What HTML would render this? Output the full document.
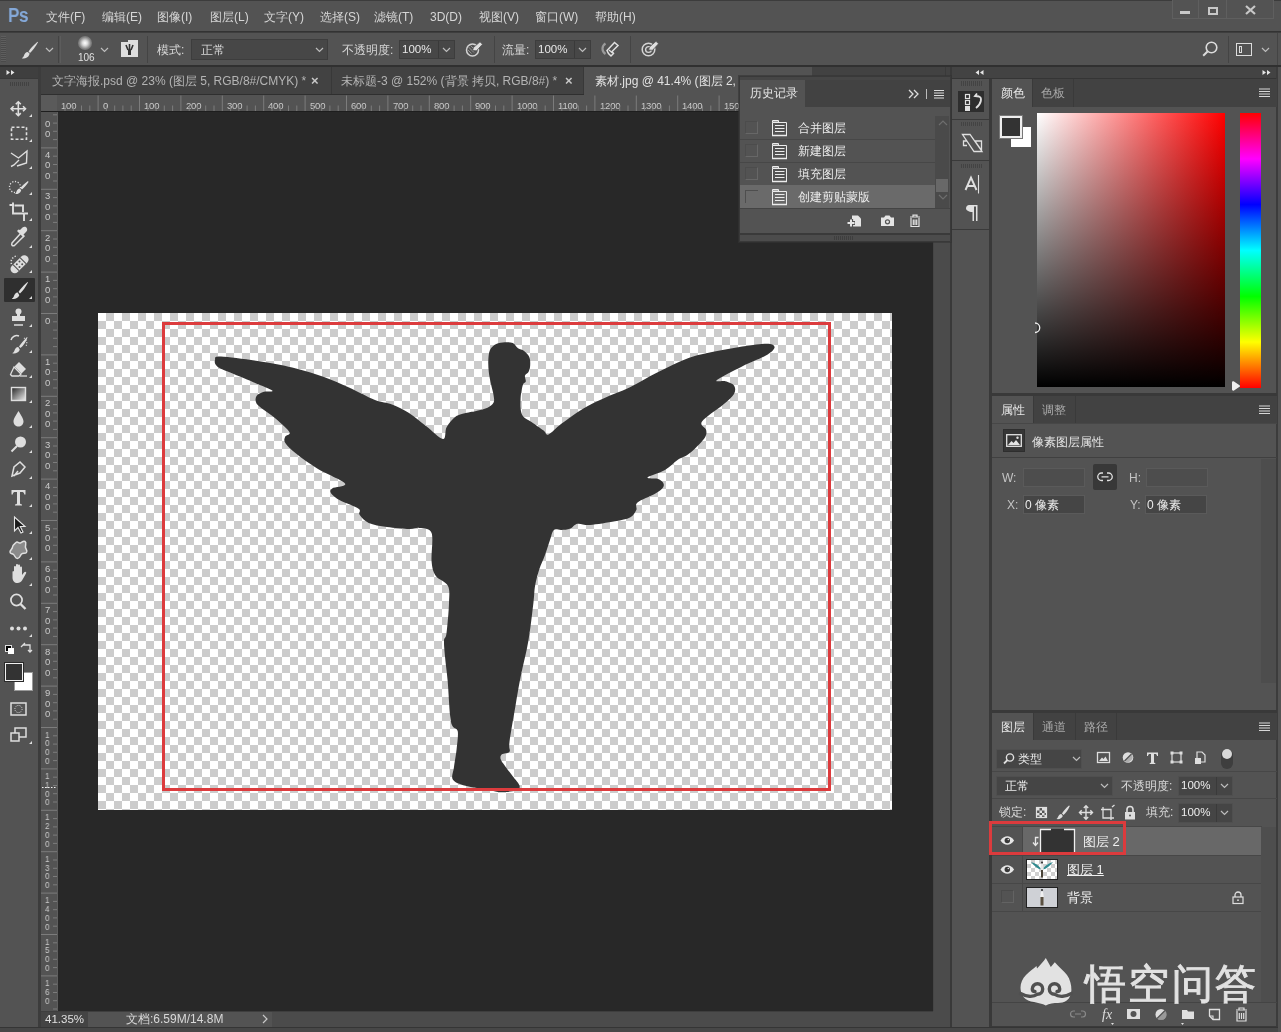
<!DOCTYPE html>
<html><head><meta charset="utf-8">
<style>
*{margin:0;padding:0;box-sizing:border-box}
html,body{width:1281px;height:1032px;overflow:hidden;background:#535353;font-family:"Liberation Sans",sans-serif;color:#d6d6d6;font-size:12px}
.a{position:absolute}
.t{position:absolute;white-space:nowrap;line-height:1;will-change:transform}
.inp{position:absolute;background:#454545;border:1px solid #3d3d3d}
svg{position:absolute;overflow:visible}
</style></head><body>

<!-- menu bar -->
<div class="a" style="left:0;top:0;width:1281px;height:1px;background:#3c3c3c"></div>
<div class="t" style="left:8px;top:5px;font-size:20px;font-weight:bold;color:#84a8d8;letter-spacing:-0.5px;transform:scaleX(0.86);transform-origin:0 0">Ps</div>
<div class="t" style="left:46px;top:11px">文件(F)</div>
<div class="t" style="left:102px;top:11px">编辑(E)</div>
<div class="t" style="left:157px;top:11px">图像(I)</div>
<div class="t" style="left:210px;top:11px">图层(L)</div>
<div class="t" style="left:264px;top:11px">文字(Y)</div>
<div class="t" style="left:320px;top:11px">选择(S)</div>
<div class="t" style="left:374px;top:11px">滤镜(T)</div>
<div class="t" style="left:430px;top:11px">3D(D)</div>
<div class="t" style="left:479px;top:11px">视图(V)</div>
<div class="t" style="left:535px;top:11px">窗口(W)</div>
<div class="t" style="left:595px;top:11px">帮助(H)</div>
<!-- window controls -->
<div class="a" style="left:1172px;top:0;width:102px;height:19px;border:1px solid #5f5f5f;border-top:none;background:#535353"></div>
<div class="a" style="left:1198px;top:0;width:1px;height:19px;background:#5f5f5f"></div>
<div class="a" style="left:1226px;top:0;width:1px;height:19px;background:#5f5f5f"></div>
<div class="a" style="left:1180px;top:11px;width:10px;height:3px;background:#c8c8c8"></div>
<div class="a" style="left:1208px;top:7px;width:10px;height:8px;border:2px solid #c8c8c8"></div>
<svg style="left:1245px;top:5px" width="11" height="10"><path d="M1,1 L10,9 M10,1 L1,9" stroke="#c8c8c8" stroke-width="2.2"/></svg>
<div class="a" style="left:0;top:31px;width:1281px;height:1px;background:#333"></div>

<!-- options bar -->
<div class="a" style="left:0;top:32px;width:1281px;height:1px;background:#3e3e3e"></div>
<div class="a" style="left:0;top:65px;width:1281px;height:2px;background:#303030"></div>
<div class="a" style="left:1px;top:36px;width:5px;height:26px;background:repeating-linear-gradient(#5e5e5e 0 1px,#4a4a4a 1px 2px)"></div>
<!-- brush icon -->
<svg style="left:21px;top:41px" width="18" height="18"><path d="M16.5,0.8 C13,4 9,8 7.5,10.5 L9,12 C11.5,10 14.5,5.5 17,1.3Z" fill="#dcdcdc"/><path d="M6.8,11 C4.5,11 3.5,13 2.8,15 C2.3,16.2 1.5,16.8 0.8,17.2 C3.5,17.8 7,17 8.3,13.8 L8.6,12.6Z" fill="#dcdcdc"/></svg>
<svg style="left:45px;top:47px" width="9" height="6"><path d="M1,1 L4.5,4.5 L8,1" stroke="#bdbdbd" stroke-width="1.2" fill="none"/></svg>
<div class="a" style="left:58px;top:36px;width:1px;height:27px;background:#444"></div>
<div class="a" style="left:60px;top:36px;width:1px;height:27px;background:#5c5c5c"></div>
<div class="a" style="left:77.5px;top:35.5px;width:14px;height:14px;border-radius:50%;background:radial-gradient(circle,#ffffff 0%,#dcdcdc 25%,rgba(150,150,150,.7) 60%,rgba(83,83,83,0) 100%)"></div>
<div class="t" style="left:78px;top:53px;font-size:10px;color:#e0e0e0">106</div>
<svg style="left:100px;top:47px" width="9" height="6"><path d="M1,1 L4.5,4.5 L8,1" stroke="#bdbdbd" stroke-width="1.2" fill="none"/></svg>
<div class="a" style="left:121px;top:40px;width:17px;height:17px;background:#dedede"></div>
<div class="a" style="left:121px;top:40px;width:7px;height:2px;background:#535353"></div>
<svg style="left:121px;top:40px" width="17" height="17"><path d="M5,5 L7,10 M8.5,4 L8.5,10 M12,5 L10,10" stroke="#333" stroke-width="1.6"/><rect x="7" y="10" width="3" height="5" fill="#333"/></svg>
<div class="a" style="left:147px;top:36px;width:1px;height:27px;background:#444"></div>
<div class="t" style="left:157px;top:44px">模式:</div>
<div class="inp" style="left:191px;top:39px;width:137px;height:21px;background:#474747"></div>
<div class="t" style="left:201px;top:44px">正常</div>
<svg style="left:315px;top:47px" width="9" height="6"><path d="M1,1 L4.5,4.5 L8,1" stroke="#bdbdbd" stroke-width="1.2" fill="none"/></svg>
<div class="t" style="left:342px;top:44px">不透明度:</div>
<div class="inp" style="left:399px;top:40px;width:56px;height:19px;background:#474747"></div>
<div class="a" style="left:438px;top:41px;width:1px;height:17px;background:#3a3a3a"></div>
<div class="t" style="left:402px;top:44px;font-size:11.5px;color:#e8e8e8">100%</div>
<svg style="left:442px;top:47px" width="9" height="6"><path d="M1,1 L4.5,4.5 L8,1" stroke="#bdbdbd" stroke-width="1.2" fill="none"/></svg>
<!-- pressure opacity icon -->
<svg style="left:465px;top:41px" width="19" height="16"><circle cx="7.5" cy="9" r="6" fill="none" stroke="#d4d4d4" stroke-width="1.5"/><path d="M3.5,6 L9,11.5 M3,9 L6.5,12.5 M5.5,4.5 L11,10" stroke="#9a9a9a" stroke-width="0.9"/><path d="M7.5,9.5 L8.5,6.5 L15,0.8 L17.5,3.3 L11.5,9.8Z" fill="#e0e0e0" stroke="#535353" stroke-width="0.8"/></svg>
<div class="a" style="left:494px;top:36px;width:1px;height:27px;background:#444"></div>
<div class="t" style="left:502px;top:44px">流量:</div>
<div class="inp" style="left:535px;top:40px;width:56px;height:19px;background:#474747"></div>
<div class="a" style="left:574px;top:41px;width:1px;height:17px;background:#3a3a3a"></div>
<div class="t" style="left:538px;top:44px;font-size:11.5px;color:#e8e8e8">100%</div>
<svg style="left:578px;top:47px" width="9" height="6"><path d="M1,1 L4.5,4.5 L8,1" stroke="#bdbdbd" stroke-width="1.2" fill="none"/></svg>
<!-- airbrush -->
<svg style="left:600px;top:41px" width="20" height="16"><path d="M5.5,2.5 C1.5,5 1.5,10.5 5.5,13" fill="none" stroke="#9a9a9a" stroke-width="2.2"/><path d="M7,9.5 L14.5,1.5 L18,4.5 L12,10.5 L13.5,12.5 L11,15 L8.5,12.5 Z" fill="none" stroke="#e0e0e0" stroke-width="1.5"/><path d="M9,9 L12.5,12" stroke="#e0e0e0" stroke-width="1.2"/></svg>
<div class="a" style="left:630px;top:36px;width:1px;height:27px;background:#444"></div>
<!-- pressure size -->
<svg style="left:641px;top:40px" width="19" height="17"><circle cx="7.5" cy="9.5" r="6.3" fill="none" stroke="#d4d4d4" stroke-width="1.5"/><circle cx="7.5" cy="9.5" r="2.9" fill="none" stroke="#d4d4d4" stroke-width="1.4"/><path d="M7.5,10 L8.5,7 L15,1.3 L17.5,3.8 L11.5,10.3Z" fill="#e0e0e0" stroke="#535353" stroke-width="0.8"/></svg>
<!-- search + workspace -->
<svg style="left:1202px;top:41px" width="16" height="16"><circle cx="9.5" cy="6.5" r="5.3" fill="none" stroke="#dcdcdc" stroke-width="1.6"/><path d="M5.5,10.5 L1.2,14.8" stroke="#dcdcdc" stroke-width="2"/></svg>
<div class="a" style="left:1228px;top:36px;width:1px;height:27px;background:#444"></div>
<div class="a" style="left:1236px;top:43px;width:16px;height:13px;border:1.5px solid #dcdcdc"></div>
<div class="a" style="left:1239px;top:46px;width:3px;height:7px;border:1px solid #dcdcdc"></div>
<svg style="left:1261px;top:47px" width="9" height="6"><path d="M1,1 L4.5,4.5 L8,1" stroke="#bdbdbd" stroke-width="1.2" fill="none"/></svg>
<div class="a" style="left:1277px;top:33px;width:1px;height:32px;background:#444"></div>
<!-- tab row -->
<div class="a" style="left:0;top:67px;width:38px;height:11px;background:#3f3f3f"></div>
<svg style="left:6px;top:69px" width="10" height="7"><path d="M0.5,1 L4,3.5 L0.5,6Z M5,1 L8.5,3.5 L5,6Z" fill="#e6e6e6"/></svg>
<div class="a" style="left:41px;top:67px;width:909px;height:28px;background:#424242"></div>
<div class="a" style="left:41px;top:94px;width:543px;height:1px;background:#2f2f2f"></div><div class="a" style="left:812px;top:94px;width:138px;height:1px;background:#2f2f2f"></div><div class="a" style="left:945px;top:67px;width:1px;height:27px;background:#3a3a3a"></div>
<div class="a" style="left:331px;top:67px;width:1px;height:27px;background:#383838"></div>
<div class="a" style="left:583px;top:67px;width:1px;height:27px;background:#383838"></div>
<div class="a" style="left:584px;top:67px;width:228px;height:28px;background:#535353"></div>
<div class="t" style="left:52px;top:75px;color:#b4b4b4">文字海报.psd @ 23% (图层 5, RGB/8#/CMYK) *</div>
<div class="t" style="left:311px;top:74px;color:#c8c8c8;font-size:13px;font-weight:bold">×</div>
<div class="t" style="left:341px;top:75px;color:#b4b4b4">未标题-3 @ 152% (背景 拷贝, RGB/8#) *</div>
<div class="t" style="left:565px;top:74px;color:#c8c8c8;font-size:13px;font-weight:bold">×</div>
<div class="t" style="left:595px;top:75px;color:#e2e2e2">素材.jpg @ 41.4% (图层 2, RGB/8#) *</div>
<!-- toolbar -->
<div class="a" style="left:38px;top:67px;width:3px;height:960px;background:#3c3c3c"></div>
<div class="a" style="left:0;top:78px;width:38px;height:1px;background:#3a3a3a"></div>
<div class="a" style="left:10px;top:82px;width:20px;height:4px;background:repeating-linear-gradient(90deg,#424242 0 1px,transparent 1px 2px)"></div>
<!-- rulers -->
<div class="a" style="left:41px;top:95px;width:892px;height:17px;background:#535353"></div>
<div class="a" style="left:41px;top:95px;width:17px;height:916px;background:#535353"></div>
<div class="a" style="left:41px;top:95px;width:16px;height:16px;background:#5a5a5a"></div>
<div class="t" style="left:61.4px;top:100.5px;font-size:9.5px;color:#cacaca;letter-spacing:-0.2px">100</div>
<div class="t" style="left:102.8px;top:100.5px;font-size:9.5px;color:#cacaca;letter-spacing:-0.2px">0</div>
<div class="t" style="left:144.2px;top:100.5px;font-size:9.5px;color:#cacaca;letter-spacing:-0.2px">100</div>
<div class="t" style="left:185.6px;top:100.5px;font-size:9.5px;color:#cacaca;letter-spacing:-0.2px">200</div>
<div class="t" style="left:227.0px;top:100.5px;font-size:9.5px;color:#cacaca;letter-spacing:-0.2px">300</div>
<div class="t" style="left:268.4px;top:100.5px;font-size:9.5px;color:#cacaca;letter-spacing:-0.2px">400</div>
<div class="t" style="left:309.8px;top:100.5px;font-size:9.5px;color:#cacaca;letter-spacing:-0.2px">500</div>
<div class="t" style="left:351.2px;top:100.5px;font-size:9.5px;color:#cacaca;letter-spacing:-0.2px">600</div>
<div class="t" style="left:392.6px;top:100.5px;font-size:9.5px;color:#cacaca;letter-spacing:-0.2px">700</div>
<div class="t" style="left:434.0px;top:100.5px;font-size:9.5px;color:#cacaca;letter-spacing:-0.2px">800</div>
<div class="t" style="left:475.4px;top:100.5px;font-size:9.5px;color:#cacaca;letter-spacing:-0.2px">900</div>
<div class="t" style="left:516.8px;top:100.5px;font-size:9.5px;color:#cacaca;letter-spacing:-0.2px">1000</div>
<div class="t" style="left:558.2px;top:100.5px;font-size:9.5px;color:#cacaca;letter-spacing:-0.2px">1100</div>
<div class="t" style="left:599.6px;top:100.5px;font-size:9.5px;color:#cacaca;letter-spacing:-0.2px">1200</div>
<div class="t" style="left:641.0px;top:100.5px;font-size:9.5px;color:#cacaca;letter-spacing:-0.2px">1300</div>
<div class="t" style="left:682.4px;top:100.5px;font-size:9.5px;color:#cacaca;letter-spacing:-0.2px">1400</div>
<div class="t" style="left:723.8px;top:100.5px;font-size:9.5px;color:#cacaca;letter-spacing:-0.2px">1500</div>
<div class="t" style="left:765.2px;top:100.5px;font-size:9.5px;color:#cacaca;letter-spacing:-0.2px">1600</div>
<div class="t" style="left:806.6px;top:100.5px;font-size:9.5px;color:#cacaca;letter-spacing:-0.2px">1700</div>
<div class="t" style="left:848.0px;top:100.5px;font-size:9.5px;color:#cacaca;letter-spacing:-0.2px">1800</div>
<div class="t" style="left:889.4px;top:100.5px;font-size:9.5px;color:#cacaca;letter-spacing:-0.2px">1900</div>
<div class="t" style="left:930.8px;top:100.5px;font-size:9.5px;color:#cacaca;letter-spacing:-0.2px">2000</div>
<div class="t" style="left:44.5px;top:118.9px;font-size:9.5px;color:#cacaca">0</div>
<div class="t" style="left:44.5px;top:129.3px;font-size:9.5px;color:#cacaca">0</div>
<div class="t" style="left:44.5px;top:149.9px;font-size:9.5px;color:#cacaca">4</div>
<div class="t" style="left:44.5px;top:160.3px;font-size:9.5px;color:#cacaca">0</div>
<div class="t" style="left:44.5px;top:170.7px;font-size:9.5px;color:#cacaca">0</div>
<div class="t" style="left:44.5px;top:191.3px;font-size:9.5px;color:#cacaca">3</div>
<div class="t" style="left:44.5px;top:201.7px;font-size:9.5px;color:#cacaca">0</div>
<div class="t" style="left:44.5px;top:212.1px;font-size:9.5px;color:#cacaca">0</div>
<div class="t" style="left:44.5px;top:232.7px;font-size:9.5px;color:#cacaca">2</div>
<div class="t" style="left:44.5px;top:243.1px;font-size:9.5px;color:#cacaca">0</div>
<div class="t" style="left:44.5px;top:253.5px;font-size:9.5px;color:#cacaca">0</div>
<div class="t" style="left:44.5px;top:274.1px;font-size:9.5px;color:#cacaca">1</div>
<div class="t" style="left:44.5px;top:284.5px;font-size:9.5px;color:#cacaca">0</div>
<div class="t" style="left:44.5px;top:294.9px;font-size:9.5px;color:#cacaca">0</div>
<div class="t" style="left:44.5px;top:315.5px;font-size:9.5px;color:#cacaca">0</div>
<div class="t" style="left:44.5px;top:356.9px;font-size:9.5px;color:#cacaca">1</div>
<div class="t" style="left:44.5px;top:367.3px;font-size:9.5px;color:#cacaca">0</div>
<div class="t" style="left:44.5px;top:377.7px;font-size:9.5px;color:#cacaca">0</div>
<div class="t" style="left:44.5px;top:398.3px;font-size:9.5px;color:#cacaca">2</div>
<div class="t" style="left:44.5px;top:408.7px;font-size:9.5px;color:#cacaca">0</div>
<div class="t" style="left:44.5px;top:419.1px;font-size:9.5px;color:#cacaca">0</div>
<div class="t" style="left:44.5px;top:439.7px;font-size:9.5px;color:#cacaca">3</div>
<div class="t" style="left:44.5px;top:450.1px;font-size:9.5px;color:#cacaca">0</div>
<div class="t" style="left:44.5px;top:460.5px;font-size:9.5px;color:#cacaca">0</div>
<div class="t" style="left:44.5px;top:481.1px;font-size:9.5px;color:#cacaca">4</div>
<div class="t" style="left:44.5px;top:491.5px;font-size:9.5px;color:#cacaca">0</div>
<div class="t" style="left:44.5px;top:501.9px;font-size:9.5px;color:#cacaca">0</div>
<div class="t" style="left:44.5px;top:522.5px;font-size:9.5px;color:#cacaca">5</div>
<div class="t" style="left:44.5px;top:532.9px;font-size:9.5px;color:#cacaca">0</div>
<div class="t" style="left:44.5px;top:543.3px;font-size:9.5px;color:#cacaca">0</div>
<div class="t" style="left:44.5px;top:563.9px;font-size:9.5px;color:#cacaca">6</div>
<div class="t" style="left:44.5px;top:574.3px;font-size:9.5px;color:#cacaca">0</div>
<div class="t" style="left:44.5px;top:584.7px;font-size:9.5px;color:#cacaca">0</div>
<div class="t" style="left:44.5px;top:605.3px;font-size:9.5px;color:#cacaca">7</div>
<div class="t" style="left:44.5px;top:615.7px;font-size:9.5px;color:#cacaca">0</div>
<div class="t" style="left:44.5px;top:626.1px;font-size:9.5px;color:#cacaca">0</div>
<div class="t" style="left:44.5px;top:646.7px;font-size:9.5px;color:#cacaca">8</div>
<div class="t" style="left:44.5px;top:657.1px;font-size:9.5px;color:#cacaca">0</div>
<div class="t" style="left:44.5px;top:667.5px;font-size:9.5px;color:#cacaca">0</div>
<div class="t" style="left:44.5px;top:688.1px;font-size:9.5px;color:#cacaca">9</div>
<div class="t" style="left:44.5px;top:698.5px;font-size:9.5px;color:#cacaca">0</div>
<div class="t" style="left:44.5px;top:708.9px;font-size:9.5px;color:#cacaca">0</div>
<div class="t" style="left:44.5px;top:729.5px;font-size:9.5px;transform:scaleX(.85);transform-origin:0 0;color:#cacaca">1</div>
<div class="t" style="left:44.5px;top:738.3px;font-size:9.5px;transform:scaleX(.85);transform-origin:0 0;color:#cacaca">0</div>
<div class="t" style="left:44.5px;top:747.1px;font-size:9.5px;transform:scaleX(.85);transform-origin:0 0;color:#cacaca">0</div>
<div class="t" style="left:44.5px;top:755.9px;font-size:9.5px;transform:scaleX(.85);transform-origin:0 0;color:#cacaca">0</div>
<div class="t" style="left:44.5px;top:770.9px;font-size:9.5px;transform:scaleX(.85);transform-origin:0 0;color:#cacaca">1</div>
<div class="t" style="left:44.5px;top:779.7px;font-size:9.5px;transform:scaleX(.85);transform-origin:0 0;color:#cacaca">1</div>
<div class="t" style="left:44.5px;top:788.5px;font-size:9.5px;transform:scaleX(.85);transform-origin:0 0;color:#cacaca">0</div>
<div class="t" style="left:44.5px;top:797.3px;font-size:9.5px;transform:scaleX(.85);transform-origin:0 0;color:#cacaca">0</div>
<div class="t" style="left:44.5px;top:812.3px;font-size:9.5px;transform:scaleX(.85);transform-origin:0 0;color:#cacaca">1</div>
<div class="t" style="left:44.5px;top:821.1px;font-size:9.5px;transform:scaleX(.85);transform-origin:0 0;color:#cacaca">2</div>
<div class="t" style="left:44.5px;top:829.9px;font-size:9.5px;transform:scaleX(.85);transform-origin:0 0;color:#cacaca">0</div>
<div class="t" style="left:44.5px;top:838.7px;font-size:9.5px;transform:scaleX(.85);transform-origin:0 0;color:#cacaca">0</div>
<div class="t" style="left:44.5px;top:853.7px;font-size:9.5px;transform:scaleX(.85);transform-origin:0 0;color:#cacaca">1</div>
<div class="t" style="left:44.5px;top:862.5px;font-size:9.5px;transform:scaleX(.85);transform-origin:0 0;color:#cacaca">3</div>
<div class="t" style="left:44.5px;top:871.3px;font-size:9.5px;transform:scaleX(.85);transform-origin:0 0;color:#cacaca">0</div>
<div class="t" style="left:44.5px;top:880.1px;font-size:9.5px;transform:scaleX(.85);transform-origin:0 0;color:#cacaca">0</div>
<div class="t" style="left:44.5px;top:895.1px;font-size:9.5px;transform:scaleX(.85);transform-origin:0 0;color:#cacaca">1</div>
<div class="t" style="left:44.5px;top:903.9px;font-size:9.5px;transform:scaleX(.85);transform-origin:0 0;color:#cacaca">4</div>
<div class="t" style="left:44.5px;top:912.7px;font-size:9.5px;transform:scaleX(.85);transform-origin:0 0;color:#cacaca">0</div>
<div class="t" style="left:44.5px;top:921.5px;font-size:9.5px;transform:scaleX(.85);transform-origin:0 0;color:#cacaca">0</div>
<div class="t" style="left:44.5px;top:936.5px;font-size:9.5px;transform:scaleX(.85);transform-origin:0 0;color:#cacaca">1</div>
<div class="t" style="left:44.5px;top:945.3px;font-size:9.5px;transform:scaleX(.85);transform-origin:0 0;color:#cacaca">5</div>
<div class="t" style="left:44.5px;top:954.1px;font-size:9.5px;transform:scaleX(.85);transform-origin:0 0;color:#cacaca">0</div>
<div class="t" style="left:44.5px;top:962.9px;font-size:9.5px;transform:scaleX(.85);transform-origin:0 0;color:#cacaca">0</div>
<div class="t" style="left:44.5px;top:977.9px;font-size:9.5px;transform:scaleX(.85);transform-origin:0 0;color:#cacaca">1</div>
<div class="t" style="left:44.5px;top:986.7px;font-size:9.5px;transform:scaleX(.85);transform-origin:0 0;color:#cacaca">6</div>
<div class="t" style="left:44.5px;top:995.5px;font-size:9.5px;transform:scaleX(.85);transform-origin:0 0;color:#cacaca">0</div>
<svg style="left:0;top:0" width="1281" height="1032"><path d="M65.0,105.5 V112 M73.3,105.5 V112 M81.5,105.5 V112 M89.8,105.5 V112 M98.1,95.5 V112 M106.4,105.5 V112 M114.7,105.5 V112 M122.9,105.5 V112 M131.2,105.5 V112 M139.5,95.5 V112 M147.8,105.5 V112 M156.1,105.5 V112 M164.3,105.5 V112 M172.6,105.5 V112 M180.9,95.5 V112 M189.2,105.5 V112 M197.5,105.5 V112 M205.7,105.5 V112 M214.0,105.5 V112 M222.3,95.5 V112 M230.6,105.5 V112 M238.9,105.5 V112 M247.1,105.5 V112 M255.4,105.5 V112 M263.7,95.5 V112 M272.0,105.5 V112 M280.3,105.5 V112 M288.5,105.5 V112 M296.8,105.5 V112 M305.1,95.5 V112 M313.4,105.5 V112 M321.7,105.5 V112 M329.9,105.5 V112 M338.2,105.5 V112 M346.5,95.5 V112 M354.8,105.5 V112 M363.1,105.5 V112 M371.3,105.5 V112 M379.6,105.5 V112 M387.9,95.5 V112 M396.2,105.5 V112 M404.5,105.5 V112 M412.7,105.5 V112 M421.0,105.5 V112 M429.3,95.5 V112 M437.6,105.5 V112 M445.9,105.5 V112 M454.1,105.5 V112 M462.4,105.5 V112 M470.7,95.5 V112 M479.0,105.5 V112 M487.3,105.5 V112 M495.5,105.5 V112 M503.8,105.5 V112 M512.1,95.5 V112 M520.4,105.5 V112 M528.7,105.5 V112 M536.9,105.5 V112 M545.2,105.5 V112 M553.5,95.5 V112 M561.8,105.5 V112 M570.1,105.5 V112 M578.3,105.5 V112 M586.6,105.5 V112 M594.9,95.5 V112 M603.2,105.5 V112 M611.5,105.5 V112 M619.7,105.5 V112 M628.0,105.5 V112 M636.3,95.5 V112 M644.6,105.5 V112 M652.9,105.5 V112 M661.1,105.5 V112 M669.4,105.5 V112 M677.7,95.5 V112 M686.0,105.5 V112 M694.3,105.5 V112 M702.5,105.5 V112 M710.8,105.5 V112 M719.1,95.5 V112 M727.4,105.5 V112 M735.7,105.5 V112 M743.9,105.5 V112 M752.2,105.5 V112 M760.5,95.5 V112 M768.8,105.5 V112 M777.1,105.5 V112 M785.3,105.5 V112 M793.6,105.5 V112 M801.9,95.5 V112 M810.2,105.5 V112 M818.5,105.5 V112 M826.7,105.5 V112 M835.0,105.5 V112 M843.3,95.5 V112 M851.6,105.5 V112 M859.9,105.5 V112 M868.1,105.5 V112 M876.4,105.5 V112 M884.7,95.5 V112 M893.0,105.5 V112 M901.3,105.5 V112 M909.5,105.5 V112 M917.8,105.5 V112 M926.1,95.5 V112 M53,114.8 H57 M53,123.1 H57 M53,131.3 H57 M53,139.6 H57 M41,147.9 H57 M53,156.2 H57 M53,164.5 H57 M53,172.7 H57 M53,181.0 H57 M41,189.3 H57 M53,197.6 H57 M53,205.9 H57 M53,214.1 H57 M53,222.4 H57 M41,230.7 H57 M53,239.0 H57 M53,247.3 H57 M53,255.5 H57 M53,263.8 H57 M41,272.1 H57 M53,280.4 H57 M53,288.7 H57 M53,296.9 H57 M53,305.2 H57 M41,313.5 H57 M53,321.8 H57 M53,330.1 H57 M53,338.3 H57 M53,346.6 H57 M41,354.9 H57 M53,363.2 H57 M53,371.5 H57 M53,379.7 H57 M53,388.0 H57 M41,396.3 H57 M53,404.6 H57 M53,412.9 H57 M53,421.1 H57 M53,429.4 H57 M41,437.7 H57 M53,446.0 H57 M53,454.3 H57 M53,462.5 H57 M53,470.8 H57 M41,479.1 H57 M53,487.4 H57 M53,495.7 H57 M53,503.9 H57 M53,512.2 H57 M41,520.5 H57 M53,528.8 H57 M53,537.1 H57 M53,545.3 H57 M53,553.6 H57 M41,561.9 H57 M53,570.2 H57 M53,578.5 H57 M53,586.7 H57 M53,595.0 H57 M41,603.3 H57 M53,611.6 H57 M53,619.9 H57 M53,628.1 H57 M53,636.4 H57 M41,644.7 H57 M53,653.0 H57 M53,661.3 H57 M53,669.5 H57 M53,677.8 H57 M41,686.1 H57 M53,694.4 H57 M53,702.7 H57 M53,710.9 H57 M53,719.2 H57 M41,727.5 H57 M53,735.8 H57 M53,744.1 H57 M53,752.3 H57 M53,760.6 H57 M41,768.9 H57 M53,777.2 H57 M53,785.5 H57 M53,793.7 H57 M53,802.0 H57 M41,810.3 H57 M53,818.6 H57 M53,826.9 H57 M53,835.1 H57 M53,843.4 H57 M41,851.7 H57 M53,860.0 H57 M53,868.3 H57 M53,876.5 H57 M53,884.8 H57 M41,893.1 H57 M53,901.4 H57 M53,909.7 H57 M53,917.9 H57 M53,926.2 H57 M41,934.5 H57 M53,942.8 H57 M53,951.1 H57 M53,959.3 H57 M53,967.6 H57 M41,975.9 H57 M53,984.2 H57 M53,992.5 H57 M53,1000.7 H57 M53,1009.0 H57" stroke="#7c7c7c" stroke-width="1" fill="none"/><path d="M42,787.5 H57.5" stroke="#f0f0f0" stroke-width="1" stroke-dasharray="1.5,1.5"/></svg>
<div class="a" style="left:41px;top:111px;width:892px;height:1px;background:#1e1e1e"></div>
<div class="a" style="left:57px;top:112px;width:1px;height:899px;background:#5e5e5e"></div><div class="a" style="left:58px;top:112px;width:1px;height:899px;background:#222"></div><div class="a" style="left:4px;top:278px;width:31px;height:24px;background:#2f2f2f;border-radius:1px"></div>
<!-- tool icons -->
<svg style="left:0;top:0" width="40" height="760">
<g fill="#dedede" stroke="none">
<!-- small triangles -->
<path d="M32,114 L32,117 L29,117Z M32,139 L32,142 L29,142Z M32,166 L32,169 L29,169Z M32,192 L32,195 L29,195Z M32,218 L32,221 L29,221Z M32,245 L32,248 L29,248Z M32,270 L32,273 L29,273Z M32,296 L32,299 L29,299Z M32,324 L32,327 L29,327Z M32,350 L32,353 L29,353Z M32,375 L32,378 L29,378Z M32,400 L32,403 L29,403Z M32,425 L32,428 L29,428Z M32,450 L32,453 L29,453Z M32,476 L32,479 L29,479Z M32,504 L32,507 L29,507Z M32,531 L32,534 L29,534Z M32,557 L32,560 L29,560Z M32,583 L32,586 L29,586Z M32,634 L32,637 L29,637Z M32,741 L32,744 L29,744Z"/>
</g>
<g stroke="#dedede" fill="none" stroke-width="1.6">
<!-- move -->
<path d="M18.3,102 V115.5 M11.3,108.7 H25.3"/>
<path d="M15.8,104.3 L18.3,101.8 L20.8,104.3 M15.8,113.1 L18.3,115.6 L20.8,113.1 M13.6,106.2 L11.1,108.7 L13.6,111.2 M23,106.2 L25.5,108.7 L23,111.2"/>
<!-- marquee -->
<rect x="11.5" y="127.3" width="15" height="12" stroke-dasharray="3,2"/>
<!-- lasso -->
<path d="M11,153 L18.5,158 L27,151 L26.5,163 L17,166 M19,160 L14,165 L11,166.5" stroke-width="1.4"/>
<!-- quick select -->
<circle cx="15" cy="187" r="5.5" stroke-dasharray="1.2,1.6" stroke-width="1.3"/>
<!-- crop -->
<path d="M9.5,205 H14 M13,202.5 V213.5 H24 V221 M14.5,205.5 H23 V212 M25,213.5 H28" stroke-width="1.9"/>
<!-- eyedropper -->
<path d="M21,233 L12,243 C11,245 12.5,246.5 14.5,245.5 L24,236" stroke-width="1.5"/>
<!-- healing -->
<rect x="8.5" y="260" width="22" height="8.5" rx="4.2" transform="rotate(-45 19.5 264.2)" fill="#dedede" stroke="none"/>
<path d="M11.5,264 A6,6 0 0 1 17.5,256" stroke-dasharray="1.3,1.6" stroke-width="1.5"/>
<!-- stamp -->
<path d="M14,325 H23" stroke-width="1.5"/>
<!-- history brush -->
<path d="M11,340 A6,6 0 0 1 19,336" stroke-width="1.5"/>
<path d="M24,338 A6,6 0 0 1 26,346" stroke-dasharray="1,1.5" stroke-width="1.2"/>
<!-- gradient -->
<!-- zoom -->
<circle cx="16.5" cy="600" r="5.6" stroke-width="1.7"/>
<path d="M20.5,604 L25.5,609" stroke-width="2.4"/>
<!-- pen -->
<path d="M12,476 L14,467 L20,462 L25,467 L20,473 Z M14,476 L18,471" stroke-width="1.5"/>
<!-- quick mask -->
<rect x="11" y="703" width="15" height="12" stroke-width="1.5"/>
<circle cx="18.5" cy="709" r="3.6" stroke-dasharray="1,1.2" stroke-width="1"/>
<!-- screen mode -->
<path d="M11,733 H19 V741 H11 Z M15,733 V728 H26 V737 H19" stroke-width="1.5"/>
<!-- swap arrows -->
<path d="M23,645 H30 V652 M21,647 L23,645 L25,643 M28,650 L30,652 L32,650" stroke-width="1.3"/>
</g>
<g fill="#dedede">
<!-- quick select brush -->
<path d="M28,181 C25,183 22,186 20.5,188 L22,189.5 C24,188 26.5,185 28.5,182Z M20,188.5 C18,188.5 17,190 16.5,192 C16,193 15.5,193.5 15,194 C17,194.5 20,193.5 21.2,190.5Z"/>
<!-- brush (selected) -->
<path d="M27.5,282 C24,285 20,289.5 18.5,292 L20,293.5 C22.5,291.5 25.5,287 28,282.5Z M17.8,292.5 C15.5,292.5 14.5,294.5 13.8,296.5 C13.3,297.7 12.5,298.3 11.8,298.7 C14.5,299.3 18,298.5 19.3,295.3Z"/>
<!-- stamp body -->
<circle cx="18.5" cy="311.5" r="3"/>
<path d="M17,313 H20 V316 H25 V321 H12 V316 H17Z"/>
<!-- history brush body -->
<path d="M27,337 C24,340 20.5,344 19,346.5 L20.5,348 C23,346 26,342 27.5,337.5Z M18.3,347 C16,347 15,349 14.3,351 C13.8,352.2 13,352.8 12.3,353.2 C15,353.8 18.5,353 19.8,349.8Z"/>
<!-- eraser -->
<path d="M19,362 L26,369 L21.5,373.5 L14.5,366.5Z"/>
<path d="M14,367 L21,374 L19,376 L12,376 L10.5,374.5 Z" fill="none" stroke="#dedede" stroke-width="1.3"/>
<path d="M20,376 H27" stroke="#dedede" stroke-width="1.3"/>
<!-- blur drop -->
<path d="M18.5,411 C16,415.5 13.5,418.5 13.5,421.5 C13.5,424.5 16,426.5 18.5,426.5 C21,426.5 23.5,424.5 23.5,421.5 C23.5,418.5 21,415.5 18.5,411Z"/>
<!-- dodge -->
<circle cx="20.5" cy="442" r="5.5"/>
<path d="M17,446 L11.5,451.5" stroke="#dedede" stroke-width="2"/>
<!-- type T -->
<path d="M11.5,490 H25.5 V494.5 H24.3 C24,492.5 23.3,492 21.5,492 H20 V503 C20,504 20.6,504.3 22,504.4 V505.5 H15 V504.4 C16.4,504.3 17,504 17,503 V492 H15.5 C13.7,492 13,492.5 12.7,494.5 H11.5Z"/>
<!-- shape splat -->
<path d="M16,542.5 C17.5,541 19,543.5 20.5,543 C22,542.5 23,540.5 25,541.5 C27,542.5 25,545.5 25.5,547.5 C26,549.5 28,551 26.5,552.5 C25,554 23,552.5 21.5,554 C20,555.5 20,558.5 17.5,558.5 C15,558.5 15,555.5 13.5,554.5 C12,553.5 10,554 10,552 C10,550 12.5,549 12.5,547 C12.5,545 14.5,544 16,542.5Z" fill="#8a8a8a" stroke="#e0e0e0" stroke-width="1.5"/>
<!-- hand -->
<path d="M14,572 V567 C14,565.5 16,565.5 16,567 V570 V565 C16,563.5 18,563.5 18,565 V570 V565.5 C18,564 20,564 20,565.5 V571 V567.5 C20,566 22,566 22,567.5 V575 L24,572.5 C25,571 27,572 26,573.5 L22,580.5 C21,582 19.5,583 17.5,583 C14.5,583 12.5,581 12.5,577.5 V572 C12.5,570.5 14,570.5 14,572Z"/>
<!-- dots -->
<circle cx="12" cy="628.5" r="2"/><circle cx="18.5" cy="628.5" r="2"/><circle cx="25" cy="628.5" r="2"/>
</g>
<!-- eyedropper head -->
<path d="M20,230 L22.5,227.5 C24,226 26.5,226.5 27,228.5 C27.5,230 27,231 26,232 L23.5,234.5 L25,236 L23.5,237.5 L17,231 L18.5,229.5Z" fill="#dedede"/>
<!-- healing dots -->
<path d="M20,257.7 L26,263.7 M13,264.7 L19,270.7" stroke="#535353" stroke-width="1.1"/><g fill="#535353"><circle cx="19.5" cy="261.5" r="1"/><circle cx="22.2" cy="264.2" r="1"/><circle cx="16.8" cy="264.2" r="1"/><circle cx="19.5" cy="266.9" r="1"/></g>
<!-- gradient square -->
<defs><linearGradient id="gr" x1="0" y1="0" x2="1" y2="1"><stop offset="0" stop-color="#222"/><stop offset="1" stop-color="#f0f0f0"/></linearGradient></defs>
<rect x="11.5" y="387.5" width="14" height="13" fill="url(#gr)" stroke="#dedede" stroke-width="1.4"/>
<!-- path select arrow -->
<path d="M14.5,517 V531 L18,527.5 L21,533 L23,532 L20.3,526.5 L25,526.5Z" fill="#1a1a1a" stroke="#e6e6e6" stroke-width="1.1"/>
</svg>
<!-- brush selected bg -->
<!-- swatches -->
<div class="a" style="left:5px;top:645px;width:7px;height:7px;background:#000;border:1px solid #ddd"></div>
<div class="a" style="left:8px;top:648px;width:6px;height:6px;background:#fff"></div>
<div class="a" style="left:14px;top:672px;width:19px;height:19px;background:#fff;border:1px solid #999"></div>
<div class="a" style="left:5px;top:663px;width:18px;height:18px;background:#333;border:1.5px solid #f0f0f0;box-shadow:0 0 0 1px #2a2a2a"></div>
<!-- canvas -->
<div class="a" style="left:58px;top:112px;width:875px;height:899px;background:#282828"></div>
<svg style="left:0;top:0" width="1281" height="1032">
<defs><pattern id="chk" x="98" y="313" width="16" height="16" patternUnits="userSpaceOnUse">
<rect width="16" height="16" fill="#fff"/><rect x="8" width="8" height="8" fill="#cccccc"/><rect y="8" width="8" height="8" fill="#cccccc"/></pattern></defs>
<rect x="98" y="313" width="794" height="497" fill="url(#chk)"/>
<path d="M215.0,360.0 C215.7,358.4 212.8,356.2 221.0,356.5 C229.2,356.8 251.5,360.0 264.0,362.0 C276.5,364.0 286.0,366.0 296.0,368.5 C306.0,371.0 315.2,373.8 324.0,377.0 C332.8,380.2 340.5,383.7 349.0,387.5 C357.5,391.3 367.8,397.2 375.0,400.0 C382.2,402.8 386.3,402.3 392.0,404.5 C397.7,406.7 403.3,409.4 409.0,413.0 C414.7,416.6 420.3,421.7 426.0,426.0 C431.7,430.3 439.6,438.8 443.0,439.0 C446.4,439.2 444.5,430.8 446.7,427.0 C448.9,423.2 452.8,418.4 456.4,416.0 C460.0,413.6 465.4,413.2 468.5,412.4 C471.6,411.6 472.0,412.0 475.2,411.2 C478.4,410.4 484.4,409.2 487.5,407.7 C490.6,406.2 492.6,404.4 493.6,402.4 C494.6,400.3 494.0,398.4 493.6,395.4 C493.2,392.3 491.8,388.0 491.0,384.1 C490.2,380.2 489.2,375.8 488.8,371.9 C488.4,368.0 488.1,364.1 488.3,360.5 C488.5,356.9 488.7,352.8 490.0,350.0 C491.3,347.2 493.7,345.3 496.2,344.0 C498.7,342.7 502.1,342.3 504.9,342.2 C507.7,342.1 510.6,342.1 512.8,343.1 C515.0,344.1 516.1,347.0 518.0,348.3 C519.9,349.6 522.2,349.6 524.1,351.0 C526.0,352.4 528.3,354.7 529.3,357.0 C530.3,359.3 530.3,362.4 530.2,364.9 C530.1,367.4 529.4,370.1 528.5,371.9 C527.6,373.6 525.5,373.8 525.0,375.4 C524.5,377.0 526.1,380.1 525.8,381.5 C525.5,382.9 523.9,382.5 523.2,384.1 C522.5,385.7 521.9,388.8 521.5,391.1 C521.1,393.4 520.8,395.2 520.6,398.1 C520.5,401.0 520.2,405.4 520.6,408.5 C521.0,411.6 521.4,414.1 523.2,416.4 C525.0,418.7 528.1,419.7 531.5,422.1 C534.9,424.5 540.8,428.6 543.6,430.6 C546.4,432.7 545.5,435.5 548.5,434.4 C551.5,433.3 555.6,428.1 561.3,423.8 C567.0,419.6 575.5,413.2 582.6,408.9 C589.7,404.6 596.2,401.8 604.0,398.2 C611.8,394.6 620.6,391.8 629.5,387.5 C638.4,383.2 647.2,377.6 657.2,372.6 C667.2,367.6 678.5,361.4 689.2,357.7 C699.9,354.0 710.6,352.3 721.2,350.2 C731.9,348.1 744.9,345.9 753.1,344.9 C761.3,343.8 766.7,343.4 770.2,343.9 C773.8,344.4 775.1,346.2 774.4,348.1 C773.7,350.1 771.2,352.6 765.9,355.6 C760.6,358.6 750.7,362.1 742.5,366.2 C734.3,370.3 719.8,377.6 716.9,380.1 C714.0,382.6 722.5,380.3 725.4,381.2 C728.2,382.1 732.6,383.3 734.0,385.4 C735.4,387.5 735.8,390.8 734.0,394.0 C732.2,397.2 728.6,400.0 723.3,404.6 C718.0,409.2 704.9,417.3 702.0,421.6 C699.1,425.9 705.9,427.4 706.2,430.2 C706.6,433.0 706.9,434.8 704.1,438.7 C701.3,442.6 693.6,450.1 689.2,453.6 C684.8,457.2 681.5,457.3 677.5,460.0 C673.5,462.7 670.0,467.1 665.0,470.0 C660.0,472.9 648.8,476.0 647.5,477.5 C646.2,479.0 654.9,478.0 657.5,478.8 C660.1,479.6 662.1,481.1 663.0,482.5 C663.9,483.9 664.3,485.6 663.0,487.5 C661.7,489.4 659.2,491.3 655.0,493.8 C650.8,496.3 640.6,499.8 637.5,502.5 C634.4,505.2 637.5,507.5 636.3,510.0 C635.0,512.5 633.5,515.6 630.0,517.5 C626.5,519.4 621.7,520.0 615.0,521.3 C608.3,522.5 596.2,524.6 590.0,525.0 C583.8,525.4 580.8,523.2 577.5,523.8 C574.2,524.4 572.7,527.8 570.0,528.8 C567.3,529.8 564.0,529.8 561.3,530.0 C558.6,530.2 555.7,528.3 553.8,530.0 C551.9,531.7 551.5,535.8 550.0,540.0 C548.5,544.2 546.8,550.1 545.0,555.0 C543.2,559.9 540.9,564.5 539.2,569.6 C537.6,574.7 536.1,580.2 535.1,585.8 C534.1,591.4 534.5,593.8 533.4,603.0 C532.3,612.2 530.5,628.6 528.4,640.8 C526.3,653.0 522.9,665.6 520.8,676.1 C518.7,686.6 517.7,693.0 515.8,703.9 C513.9,714.8 510.6,733.7 509.5,741.7 C508.4,749.7 510.8,749.6 509.5,751.7 C508.2,753.8 503.4,753.0 501.9,754.3 C500.4,755.6 500.1,757.2 500.7,759.3 C501.3,761.4 503.6,763.9 505.7,766.9 C507.8,769.9 511.0,773.9 513.3,777.0 C515.6,780.1 519.2,783.5 519.6,785.8 C520.0,788.1 519.4,789.8 515.8,790.8 C512.2,791.8 502.7,792.2 498.1,792.0 C493.5,791.8 493.4,790.6 488.0,789.6 C482.6,788.6 471.3,787.5 465.4,785.8 C459.5,784.1 454.7,782.6 452.8,779.5 C450.9,776.4 453.4,771.9 454.0,766.9 C454.6,761.9 456.0,755.1 456.6,749.2 C457.2,743.3 458.4,735.4 457.8,731.6 C457.2,727.8 454.1,729.0 452.8,726.5 C451.5,724.0 451.1,724.0 450.2,716.5 C449.3,709.0 448.5,690.9 447.7,681.2 C446.9,671.5 445.8,665.2 445.2,658.5 C444.6,651.8 443.8,645.0 444.0,640.8 C444.2,636.6 445.7,639.6 446.5,633.3 C447.3,627.0 448.8,610.9 449.0,603.0 C449.2,595.1 450.1,590.3 447.9,585.8 C445.7,581.2 438.4,579.8 435.7,575.7 C433.0,571.7 432.3,568.6 431.6,561.5 C430.9,554.4 433.6,538.7 431.6,533.1 C429.6,527.5 423.2,528.7 419.5,528.0 C415.8,527.3 414.7,529.2 409.3,529.0 C403.9,528.8 393.8,528.0 387.0,527.0 C380.2,526.0 373.3,524.9 368.7,522.9 C364.1,520.9 361.3,517.2 359.6,514.8 C357.9,512.4 361.8,511.1 358.6,508.7 C355.4,506.3 344.9,503.1 340.3,500.6 C335.7,498.1 332.6,495.5 331.2,493.5 C329.8,491.5 329.9,490.1 332.2,488.4 C334.5,486.7 347.5,486.8 345.0,483.5 C342.5,480.2 325.4,473.5 317.2,468.5 C309.0,463.5 301.3,457.9 296.0,453.6 C290.7,449.4 287.1,445.8 285.3,443.0 C283.5,440.2 284.6,438.4 285.3,436.6 C286.0,434.8 290.9,435.2 289.5,432.3 C288.1,429.4 280.9,423.2 276.7,419.5 C272.4,415.8 267.4,412.7 264.0,410.0 C260.6,407.3 257.8,405.8 256.5,403.5 C255.2,401.2 255.2,397.9 256.5,396.0 C257.8,394.1 261.3,392.7 264.0,391.8 C266.7,390.9 274.3,392.3 272.5,390.7 C270.7,389.1 260.8,385.4 253.3,382.2 C245.8,379.0 233.8,374.3 227.7,371.6 C221.6,368.9 219.1,368.1 217.0,366.2 C214.9,364.3 214.3,361.6 215.0,360.0Z" fill="#333333"/>
<rect x="163.5" y="323.5" width="666" height="466" fill="none" stroke="#dc3b3d" stroke-width="3"/>
</svg>
<!-- vertical scrollbar + status -->
<div class="a" style="left:933px;top:112px;width:17px;height:899px;background:#4b4b4b;border-left:1px solid #454545"></div>
<div class="a" style="left:41px;top:1011px;width:909px;height:16px;background:#4b4b4b"></div>
<div class="a" style="left:41px;top:1011px;width:47px;height:16px;background:#444444"></div>
<div class="a" style="left:88px;top:1011px;width:184px;height:16px;background:#535353"></div>
<div class="a" style="left:41px;top:1011px;width:892px;height:1px;background:#3e3e3e"></div>
<div class="a" style="left:0;top:1027px;width:1281px;height:5px;background:#474747"></div>
<div class="a" style="left:0;top:1027px;width:1281px;height:1px;background:#353535"></div>
<div class="t" style="left:45px;top:1014px;font-size:11.5px;color:#e0e0e0">41.35%</div>
<div class="t" style="left:126px;top:1013px;font-size:12px;color:#d8d8d8">文档:6.59M/14.8M</div>
<svg style="left:262px;top:1014px" width="6" height="10"><path d="M1,1 L5,5 L1,9" stroke="#c8c8c8" stroke-width="1.2" fill="none"/></svg>

<!-- icon column -->
<div class="a" style="left:950px;top:67px;width:2px;height:960px;background:#393939"></div>
<div class="a" style="left:952px;top:67px;width:37px;height:960px;background:#535353"></div>
<div class="a" style="left:989px;top:67px;width:3px;height:960px;background:#393939"></div>
<div class="a" style="left:952px;top:67px;width:329px;height:11px;background:#434343"></div>
<div class="a" style="left:952px;top:78px;width:329px;height:1px;background:#353535"></div>
<svg style="left:975px;top:69px" width="10" height="7"><path d="M4,1 L0.5,3.5 L4,6Z M8.5,1 L5,3.5 L8.5,6Z" fill="#e6e6e6"/></svg>
<svg style="left:1262px;top:69px" width="10" height="7"><path d="M0.5,1 L4,3.5 L0.5,6Z M5,1 L8.5,3.5 L5,6Z" fill="#e6e6e6"/></svg>
<div class="a" style="left:952px;top:119px;width:37px;height:1px;background:#3a3a3a"></div>
<div class="a" style="left:952px;top:160px;width:37px;height:1px;background:#3a3a3a"></div>
<div class="a" style="left:952px;top:229px;width:37px;height:1px;background:#3a3a3a"></div>
<div class="a" style="left:961px;top:81px;width:21px;height:5px;background:repeating-linear-gradient(90deg,#434343 0 1px,transparent 1px 2px)"></div>
<div class="a" style="left:961px;top:122px;width:21px;height:4px;background:repeating-linear-gradient(90deg,#434343 0 1px,transparent 1px 2px)"></div>
<div class="a" style="left:961px;top:164px;width:21px;height:4px;background:repeating-linear-gradient(90deg,#434343 0 1px,transparent 1px 2px)"></div>
<div class="a" style="left:958px;top:91px;width:26px;height:21px;background:#2e2e2e"></div>
<svg style="left:952px;top:79px" width="37" height="150">
<g fill="none" stroke="#e0e0e0" stroke-width="1.2">
<rect x="13.5" y="15.5" width="4" height="4"/><rect x="13.5" y="21.5" width="4" height="4"/>
<path d="M25,14.5 L23,17 L27,17.5 C30,18.5 30,24 24,29" stroke-width="1.8"/>
<path d="M10.5,55.5 H18 L30,72.5 H22 Z M15,62 H11.5 V66.5 H15 M22.5,62 H29.5 V72.5 M23.5,63 L28.5,70" stroke-width="1.3"/>
<path d="M13.5,111 L19,98.5 L24.5,111 M15.3,107 H22.7" stroke-width="1.9"/><path d="M26.5,96 V114.5" stroke-width="1.1"/>
</g>
<rect x="13" y="27" width="5" height="5" fill="#e0e0e0"/>
<path d="M17,126 H25.5 V142 H24 V127.5 H22 V142 H20.5 V133 C16.5,133 14,131 14,129.5 C14,127.5 15.5,126 17,126Z" fill="#e0e0e0"/>
</svg>

<!-- history panel -->
<div class="a" style="left:738px;top:75px;width:214px;height:168px;background:#333;opacity:.6"></div>
<div class="a" style="left:739px;top:76px;width:212px;height:166px;background:#535353;border:1px solid #393939"></div>
<div class="a" style="left:740px;top:77px;width:210px;height:3px;background:#464646"></div>
<div class="a" style="left:740px;top:80px;width:210px;height:27px;background:#424242"></div>
<div class="a" style="left:740px;top:80px;width:65px;height:28px;background:#535353"></div>
<div class="t" style="left:750px;top:87px;color:#e6e6e6">历史记录</div>
<svg style="left:908px;top:89px" width="40" height="10"><path d="M1,1 L5,5 L1,9 M6,1 L10,5 L6,9" stroke="#dcdcdc" stroke-width="1.3" fill="none"/><path d="M18.5,0 V10" stroke="#bbb" stroke-width="1"/><path d="M26,1.5 H36 M26,4 H36 M26,6.5 H36 M26,9 H36" stroke="#dcdcdc" stroke-width="1"/></svg>
<div class="a" style="left:740px;top:116px;width:195px;height:92px;background:#535353"></div>
<div class="a" style="left:740px;top:139px;width:195px;height:1px;background:#474747"></div>
<div class="a" style="left:740px;top:162px;width:195px;height:1px;background:#474747"></div>
<div class="a" style="left:740px;top:185px;width:195px;height:23px;background:#6a6a6a"></div>
<div class="a" style="left:935px;top:116px;width:14px;height:92px;background:#4a4a4a"></div>
<div class="a" style="left:936px;top:179px;width:12px;height:13px;background:#686868"></div>
<svg style="left:937px;top:119px" width="12" height="85"><path d="M2,6 L6,2 L10,6" stroke="#6e6e6e" stroke-width="1.2" fill="none"/><path d="M2,76 L6,80 L10,76" stroke="#6e6e6e" stroke-width="1.2" fill="none"/></svg>
<div class="a" style="left:740px;top:208px;width:210px;height:25px;background:#535353;border-top:1px solid #444"></div>
<div class="a" style="left:740px;top:233px;width:210px;height:2px;background:#3a3a3a"></div>
<div class="a" style="left:740px;top:235px;width:210px;height:6px;background:#4c4c4c"></div>
<div class="a" style="left:834px;top:236px;width:19px;height:4px;background:repeating-linear-gradient(90deg,#3e3e3e 0 1px,transparent 1px 2px)"></div>

<div class="a" style="left:745px;top:121px;width:13px;height:13px;border-right:1px solid #676767;border-bottom:1px solid #676767;border-left:1px solid #4c4c4c;border-top:1px solid #4c4c4c"></div>
<svg style="left:772px;top:120px" width="15" height="16"><path d="M0.5,2.5 V0.5 H6.5 V2.5 M0.5,2.5 H14.5 V15.5 H0.5 Z" fill="none" stroke="#ececec" stroke-width="1"/><path d="M1,2 H6 M3,5.5 H12.5 M3,8.5 H12.5 M3,11.5 H12.5" stroke="#ececec" stroke-width="1"/><path d="M0,15.5 H15" stroke="#ececec" stroke-width="1.5"/></svg>
<div class="t" style="left:798px;top:122px;font-size:12px;color:#ececec">合并图层</div>
<div class="a" style="left:745px;top:144px;width:13px;height:13px;border-right:1px solid #676767;border-bottom:1px solid #676767;border-left:1px solid #4c4c4c;border-top:1px solid #4c4c4c"></div>
<svg style="left:772px;top:143px" width="15" height="16"><path d="M0.5,2.5 V0.5 H6.5 V2.5 M0.5,2.5 H14.5 V15.5 H0.5 Z" fill="none" stroke="#ececec" stroke-width="1"/><path d="M1,2 H6 M3,5.5 H12.5 M3,8.5 H12.5 M3,11.5 H12.5" stroke="#ececec" stroke-width="1"/><path d="M0,15.5 H15" stroke="#ececec" stroke-width="1.5"/></svg>
<div class="t" style="left:798px;top:145px;font-size:12px;color:#ececec">新建图层</div>
<div class="a" style="left:745px;top:167px;width:13px;height:13px;border-right:1px solid #676767;border-bottom:1px solid #676767;border-left:1px solid #4c4c4c;border-top:1px solid #4c4c4c"></div>
<svg style="left:772px;top:166px" width="15" height="16"><path d="M0.5,2.5 V0.5 H6.5 V2.5 M0.5,2.5 H14.5 V15.5 H0.5 Z" fill="none" stroke="#ececec" stroke-width="1"/><path d="M1,2 H6 M3,5.5 H12.5 M3,8.5 H12.5 M3,11.5 H12.5" stroke="#ececec" stroke-width="1"/><path d="M0,15.5 H15" stroke="#ececec" stroke-width="1.5"/></svg>
<div class="t" style="left:798px;top:168px;font-size:12px;color:#ececec">填充图层</div>
<div class="a" style="left:745px;top:190px;width:13px;height:13px;border-left:1px solid #4e4e4e;border-top:1px solid #4e4e4e"></div>
<svg style="left:772px;top:189px" width="15" height="16"><path d="M0.5,2.5 V0.5 H6.5 V2.5 M0.5,2.5 H14.5 V15.5 H0.5 Z" fill="none" stroke="#ececec" stroke-width="1"/><path d="M1,2 H6 M3,5.5 H12.5 M3,8.5 H12.5 M3,11.5 H12.5" stroke="#ececec" stroke-width="1"/><path d="M0,15.5 H15" stroke="#ececec" stroke-width="1.5"/></svg>
<div class="t" style="left:798px;top:191px;font-size:12px;color:#ececec">创建剪贴蒙版</div>
<svg style="left:846px;top:214px" width="80" height="14">
<path d="M6,1.5 H12 L15,4.5 V12.5 H6Z" fill="#e4e4e4"/><path d="M1,9 H9 M5,5 V13" stroke="#535353" stroke-width="4.2"/><path d="M1.5,9 H8.5 M5,5.5 V12.5" stroke="#e4e4e4" stroke-width="2"/>
<path d="M35,3.5 H38 L39.5,1.5 H43.5 L45,3.5 H48 V12 H35Z" fill="#e4e4e4"/><circle cx="41.5" cy="7.8" r="2.6" fill="#535353"/><circle cx="41.5" cy="7.8" r="1.4" fill="#e4e4e4"/>
<path d="M64,3 H74 M67,3 V1.2 H71 V3 M65,4 V12.5 H73 V4 M67.3,5.5 V11 M69,5.5 V11 M70.7,5.5 V11" fill="none" stroke="#e4e4e4" stroke-width="1.2"/>
</svg><!-- right panels -->
<div class="a" style="left:992px;top:79px;width:285px;height:948px;background:#535353"></div>
<div class="a" style="left:1276px;top:67px;width:2px;height:960px;background:#3c3c3c"></div>
<div class="a" style="left:1278px;top:67px;width:3px;height:965px;background:#535353"></div>
<!-- color panel header -->
<div class="a" style="left:992px;top:79px;width:285px;height:28px;background:#424242"></div>
<div class="a" style="left:992px;top:79px;width:40px;height:29px;background:#535353"></div>
<div class="a" style="left:1032px;top:79px;width:1px;height:28px;background:#3a3a3a"></div>
<div class="a" style="left:1073px;top:79px;width:1px;height:28px;background:#3a3a3a"></div>
<div class="t" style="left:1001px;top:87px;color:#e8e8e8">颜色</div>
<div class="t" style="left:1041px;top:87px;color:#a8a8a8">色板</div>
<svg style="left:1259px;top:88px" width="12" height="9"><path d="M0,1 H11 M0,3.5 H11 M0,6 H11 M0,8.5 H11" stroke="#d8d8d8" stroke-width="1"/></svg>
<!-- swatches -->
<div class="a" style="left:1011px;top:127px;width:20px;height:20px;background:#fff"></div>
<div class="a" style="left:1000px;top:116px;width:22px;height:22px;background:#333;border:2px solid #eee;box-shadow:0 0 0 1px #777"></div>
<!-- color field -->
<div class="a" style="left:1037px;top:113px;width:188px;height:274px;background:linear-gradient(to bottom,rgba(0,0,0,0),#000),linear-gradient(to right,#fff,#ff0000)"></div>
<div class="a" style="left:1240px;top:113px;width:21px;height:275px;background:linear-gradient(to bottom,#ff0000 0%,#ff00ff 16.7%,#0000ff 33.3%,#00ffff 50%,#00ff00 66.7%,#ffff00 83.3%,#ff0000 100%)"></div>
<svg style="left:1030px;top:320px" width="16" height="16"><path d="M5,3 A4.5,4.5 0 1 1 5,12.5" fill="none" stroke="#f0f0f0" stroke-width="1.3"/></svg>
<svg style="left:1231px;top:381px" width="10" height="10"><path d="M1,1.5 C1,0.5 2,0 3,0.5 L8.5,4.2 C9.3,4.7 9.3,5.3 8.5,5.8 L3,9.5 C2,10 1,9.5 1,8.5Z" fill="#f0f0f0"/></svg>
<div class="a" style="left:992px;top:393px;width:285px;height:3px;background:#393939"></div>

<!-- properties -->
<div class="a" style="left:992px;top:396px;width:285px;height:27px;background:#424242"></div>
<div class="a" style="left:992px;top:396px;width:41px;height:28px;background:#535353"></div>
<div class="a" style="left:1033px;top:396px;width:1px;height:27px;background:#3a3a3a"></div>
<div class="a" style="left:1075px;top:396px;width:1px;height:27px;background:#3a3a3a"></div>
<div class="t" style="left:1001px;top:404px;color:#e8e8e8">属性</div>
<div class="t" style="left:1042px;top:404px;color:#a8a8a8">调整</div>
<svg style="left:1259px;top:405px" width="12" height="9"><path d="M0,1 H11 M0,3.5 H11 M0,6 H11 M0,8.5 H11" stroke="#d8d8d8" stroke-width="1"/></svg>
<div class="a" style="left:992px;top:423px;width:285px;height:1px;background:#474747"></div>
<div class="a" style="left:1003px;top:429px;width:22px;height:23px;background:#363636;border:1px solid #2e2e2e"></div>
<svg style="left:1006px;top:434px" width="16" height="13"><rect x="0.7" y="0.7" width="14.6" height="11.6" fill="none" stroke="#e2e2e2" stroke-width="1.3"/><path d="M2,11 L5.5,7 L7.5,9 L10,6 L14,11Z" fill="#e2e2e2"/><circle cx="11.5" cy="3.8" r="1.2" fill="#e2e2e2"/></svg>
<div class="t" style="left:1032px;top:436px;font-size:12px;color:#e4e4e4">像素图层属性</div>
<div class="a" style="left:992px;top:457px;width:285px;height:1px;background:#404040"></div>
<div class="a" style="left:1261px;top:459px;width:15px;height:224px;background:#4d4d4d"></div>
<div class="t" style="left:1002px;top:472px;font-size:12px;color:#c4c4c4">W:</div>
<div class="inp" style="left:1023px;top:468px;width:62px;height:19px;border-color:#5a5a5a;background:#4d4d4d"></div>
<div class="a" style="left:1093px;top:464px;width:24px;height:26px;background:#383838;border-radius:2px"></div>
<svg style="left:1097px;top:472px" width="16" height="10"><path d="M6,1 H4.5 A3.5,3.5 0 0 0 4.5,8.5 H6 M10,1 H11.5 A3.5,3.5 0 0 1 11.5,8.5 H10 M4.5,4.8 H11.5" fill="none" stroke="#e0e0e0" stroke-width="1.3"/></svg>
<div class="t" style="left:1129px;top:472px;font-size:12px;color:#c4c4c4">H:</div>
<div class="inp" style="left:1146px;top:468px;width:62px;height:19px;border-color:#5a5a5a;background:#4d4d4d"></div>
<div class="t" style="left:1007px;top:499px;font-size:12px;color:#c4c4c4">X:</div>
<div class="inp" style="left:1023px;top:495px;width:62px;height:19px;border-color:#5a5a5a;background:#454545"></div>
<div class="t" style="left:1025px;top:499px;font-size:12px;color:#ececec">0 像素</div>
<div class="t" style="left:1130px;top:499px;font-size:12px;color:#c4c4c4">Y:</div>
<div class="inp" style="left:1145px;top:495px;width:62px;height:19px;border-color:#5a5a5a;background:#454545"></div>
<div class="t" style="left:1147px;top:499px;font-size:12px;color:#ececec">0 像素</div>
<div class="a" style="left:992px;top:710px;width:285px;height:3px;background:#393939"></div>

<!-- layers -->
<div class="a" style="left:992px;top:713px;width:285px;height:27px;background:#424242"></div>
<div class="a" style="left:992px;top:713px;width:41px;height:28px;background:#535353"></div>
<div class="a" style="left:1033px;top:713px;width:1px;height:27px;background:#3a3a3a"></div>
<div class="a" style="left:1075px;top:713px;width:1px;height:27px;background:#3a3a3a"></div>
<div class="a" style="left:1116px;top:713px;width:1px;height:27px;background:#3a3a3a"></div>
<div class="t" style="left:1001px;top:721px;color:#e8e8e8">图层</div>
<div class="t" style="left:1042px;top:721px;color:#a8a8a8">通道</div>
<div class="t" style="left:1084px;top:721px;color:#a8a8a8">路径</div>
<svg style="left:1259px;top:722px" width="12" height="9"><path d="M0,1 H11 M0,3.5 H11 M0,6 H11 M0,8.5 H11" stroke="#d8d8d8" stroke-width="1"/></svg>
<!-- filter row -->
<div class="inp" style="left:996px;top:749px;width:86px;height:20px;background:#454545;border-color:#4f4f4f"></div>
<svg style="left:1003px;top:753px" width="12" height="12"><circle cx="7" cy="4.5" r="3.6" fill="none" stroke="#e0e0e0" stroke-width="1.4"/><path d="M4.5,7 L1,10.5" stroke="#e0e0e0" stroke-width="1.8"/></svg>
<div class="t" style="left:1018px;top:753px;color:#ececec">类型</div>
<svg style="left:1072px;top:756px" width="9" height="6"><path d="M1,1 L4.5,4.5 L8,1" stroke="#bdbdbd" stroke-width="1.2" fill="none"/></svg>
<svg style="left:1096px;top:750px" width="140" height="20">
<rect x="1.5" y="2.5" width="12" height="10" fill="none" stroke="#dedede" stroke-width="1.3"/><path d="M3,11 L6,7.5 L7.5,9 L9.5,6.5 L12,11Z" fill="#dedede"/>
<circle cx="32" cy="7.5" r="5.3" fill="#dedede"/><path d="M28.5,11 L35.5,4" stroke="#535353" stroke-width="1.2"/><path d="M35.5,4 A5,5 0 0 1 28.5,11" fill="#535353" opacity=".35"/>
<path d="M51,2.5 H62 V6 H61 C60.8,4.5 60.3,4 59,4 H58 V12 C58,12.8 58.4,13 59.3,13 V14 H53.7 V13 C54.6,13 55,12.8 55,12 V4 H54 C52.7,4 52.2,4.5 52,6 H51Z" fill="#dedede"/>
<rect x="76" y="3" width="9" height="9" fill="none" stroke="#dedede" stroke-width="1.2"/><rect x="74.5" y="1.5" width="3" height="3" fill="#dedede"/><rect x="83.5" y="1.5" width="3" height="3" fill="#dedede"/><rect x="74.5" y="10.5" width="3" height="3" fill="#dedede"/><rect x="83.5" y="10.5" width="3" height="3" fill="#dedede"/>
<path d="M101,2 H106 L109,5 V12 H101Z" fill="none" stroke="#dedede" stroke-width="1.2"/><rect x="99" y="8" width="6" height="6" fill="#dedede"/>
</svg>
<div class="a" style="left:1221px;top:749px;width:12px;height:20px;background:#3e3e3e;border-radius:6px"></div>
<div class="a" style="left:1222px;top:749px;width:10px;height:10px;background:#d8d8d8;border-radius:50%"></div>
<div class="a" style="left:992px;top:771px;width:285px;height:1px;background:#474747"></div>
<!-- blend row -->
<div class="inp" style="left:996px;top:776px;width:117px;height:20px;background:#454545;border-color:#4f4f4f"></div>
<div class="t" style="left:1005px;top:780px;color:#ececec">正常</div>
<svg style="left:1100px;top:783px" width="9" height="6"><path d="M1,1 L4.5,4.5 L8,1" stroke="#bdbdbd" stroke-width="1.2" fill="none"/></svg>
<div class="t" style="left:1121px;top:780px;color:#d8d8d8">不透明度:</div>
<div class="inp" style="left:1178px;top:776px;width:55px;height:20px;background:#454545;border-color:#4f4f4f"></div>
<div class="a" style="left:1216px;top:777px;width:1px;height:18px;background:#3a3a3a"></div>
<div class="t" style="left:1181px;top:780px;font-size:11.5px;color:#ececec">100%</div>
<svg style="left:1220px;top:783px" width="9" height="6"><path d="M1,1 L4.5,4.5 L8,1" stroke="#bdbdbd" stroke-width="1.2" fill="none"/></svg>
<div class="a" style="left:992px;top:798px;width:285px;height:1px;background:#474747"></div>
<!-- lock row -->
<div class="t" style="left:999px;top:806px;color:#d8d8d8">锁定:</div>
<svg style="left:1034px;top:804px" width="105" height="17">
<rect x="2.5" y="3.5" width="10" height="10" fill="none" stroke="#dedede" stroke-width="1.2"/><path d="M3,4 H5.5 V6.5 H3Z M8,4 H12 V6.5 H8Z M5.5,6.5 H8 V9 H5.5Z M3,9 H5.5 V11.5 H3Z M8,9 H10.5 V11.5 H8Z M10.5,6.5 H12.5 V9 H10.5Z M5.5,11 H8 V13 H5.5Z M10.5,11 H12.5 V13 H10.5Z" fill="#dedede"/>
<path d="M35,1.5 C32,4 29,7.5 28,9.5 L29.5,11 C31.5,9.5 34,6 35.8,2Z M27.3,10 C25.5,10 24.6,11.5 24,13 C23.6,14 23,14.5 22.5,15 C25,15.5 28,14.5 28.8,12Z" fill="#dedede"/>
<path d="M52,2 V15 M45.5,8.5 H58.5 M49.8,4 L52,1.8 L54.2,4 M49.8,13 L52,15.2 L54.2,13 M47.7,6.3 L45.5,8.5 L47.7,10.7 M56.3,6.3 L58.5,8.5 L56.3,10.7" fill="none" stroke="#dedede" stroke-width="1.4"/>
<path d="M69,3 V14 H80 M67,5.5 H77 V16 M78,3 L80.5,1" fill="none" stroke="#dedede" stroke-width="1.3"/>
<path d="M93,8 V5.5 A3,3 0 0 1 99,5.5 V8" fill="none" stroke="#dedede" stroke-width="1.6"/><rect x="91" y="8" width="10" height="7.5" fill="#dedede"/><circle cx="96" cy="11.5" r="1" fill="#535353"/>
</svg>
<div class="t" style="left:1146px;top:806px;color:#d8d8d8">填充:</div>
<div class="inp" style="left:1178px;top:803px;width:55px;height:20px;background:#454545;border-color:#4f4f4f"></div>
<div class="a" style="left:1216px;top:804px;width:1px;height:18px;background:#3a3a3a"></div>
<div class="t" style="left:1181px;top:807px;font-size:11.5px;color:#ececec">100%</div>
<svg style="left:1220px;top:810px" width="9" height="6"><path d="M1,1 L4.5,4.5 L8,1" stroke="#bdbdbd" stroke-width="1.2" fill="none"/></svg>
<!-- layer rows -->
<div class="a" style="left:992px;top:826px;width:270px;height:1px;background:#474747"></div>
<div class="a" style="left:992px;top:827px;width:31px;height:28px;background:#535353"></div>
<div class="a" style="left:1023px;top:827px;width:238px;height:28px;background:#686868"></div>
<div class="a" style="left:992px;top:855px;width:270px;height:1px;background:#474747"></div>
<div class="a" style="left:992px;top:883px;width:270px;height:1px;background:#474747"></div>
<div class="a" style="left:992px;top:911px;width:270px;height:1px;background:#474747"></div>
<div class="a" style="left:1022px;top:827px;width:1px;height:84px;background:#474747"></div>
<div class="a" style="left:1261px;top:827px;width:15px;height:175px;background:#4e4e4e"></div>
<svg style="left:999px;top:835px" width="17" height="11"><path d="M1.5,5.5 C3.5,2.5 6,1.3 8.3,1.3 C10.6,1.3 13.1,2.5 15.1,5.5 C13.1,8.5 10.6,9.7 8.3,9.7 C6,9.7 3.5,8.5 1.5,5.5Z" fill="#e6e6e6"/><circle cx="8.3" cy="5.5" r="2.7" fill="#3a3a3a"/><circle cx="9.3" cy="4.5" r="0.8" fill="#e6e6e6"/></svg>
<svg style="left:999px;top:864px" width="17" height="11"><path d="M1.5,5.5 C3.5,2.5 6,1.3 8.3,1.3 C10.6,1.3 13.1,2.5 15.1,5.5 C13.1,8.5 10.6,9.7 8.3,9.7 C6,9.7 3.5,8.5 1.5,5.5Z" fill="#e6e6e6"/><circle cx="8.3" cy="5.5" r="2.7" fill="#3a3a3a"/><circle cx="9.3" cy="4.5" r="0.8" fill="#e6e6e6"/></svg>
<div class="a" style="left:1001px;top:890px;width:13px;height:13px;border-right:1px solid #636363;border-bottom:1px solid #636363;border-left:1px solid #4a4a4a;border-top:1px solid #4a4a4a"></div>
<svg style="left:1031px;top:836px" width="9" height="11"><path d="M7.5,1.5 H4.5 V9" fill="none" stroke="#e8e8e8" stroke-width="1.3"/><path d="M2,6.5 L4.5,9.5 L7,6.5" fill="none" stroke="#e8e8e8" stroke-width="1.3"/></svg>
<div class="a" style="left:1041px;top:829px;width:34px;height:24px;background:#333"></div>
<svg style="left:1039px;top:828px" width="38" height="26"><path d="M1.5,25 V1.5 H12 M25,1.5 H35.5 V25" fill="none" stroke="#f0f0f0" stroke-width="1.3"/></svg>
<div class="t" style="left:1083px;top:835px;font-size:13px;color:#f0f0f0">图层 2</div>
<!-- layer 1 thumb -->
<div class="a" style="left:1026px;top:859px;width:32px;height:21px;background:#fff;border:1px solid #222;overflow:hidden">
<div style="position:absolute;left:0;top:0;width:32px;height:21px;background:repeating-conic-gradient(#cfcfcf 0 25%,#fff 0 50%) 0 0/8px 8px"></div>
</div>
<svg style="left:1026px;top:859px" width="32" height="21"><path d="M5,3 C9,4 12,6 14.5,9 L15,10.5 C12,10 8,7 5,3Z M27,3 C23,4 20,6 17.5,9 L17,10.5 C20,10 24,7 27,3Z" fill="#2f8a8f"/><circle cx="16" cy="3.5" r="1.1" fill="#3a3a3a"/><path d="M15,5 H17 L17.5,11 H17 L17,18 H15 L15,11 H14.5Z" fill="#e8e8e8"/><path d="M15,11 H17 V18.5 H15Z" fill="#4a4438"/></svg>
<div class="t" style="left:1067px;top:863px;font-size:13px;color:#f0f0f0;text-decoration:underline">图层 1</div>
<!-- bg thumb -->
<div class="a" style="left:1026px;top:887px;width:32px;height:21px;background:#cfd1d6;border:1px solid #222"></div>
<svg style="left:1026px;top:887px" width="32" height="21"><circle cx="16" cy="3" r="1.1" fill="#333"/><path d="M15,4.5 H17 L17.8,10 H14.2Z" fill="#f0f0f0"/><path d="M14.5,10 H17.5 V18.5 H14.5Z" fill="#5a5040"/></svg>
<div class="t" style="left:1067px;top:891px;font-size:13px;color:#f0f0f0">背景</div>
<svg style="left:1232px;top:891px" width="12" height="13"><path d="M3,6 V4 A3,3 0 0 1 9,4 V6" fill="none" stroke="#dedede" stroke-width="1.3"/><rect x="1" y="6" width="10" height="6.5" fill="none" stroke="#dedede" stroke-width="1.2"/><circle cx="6" cy="9.2" r="0.9" fill="#dedede"/></svg>
<!-- red highlight -->
<div class="a" style="left:989px;top:821px;width:137px;height:34px;border:3px solid #dc3b3d"></div>
<!-- bottom bar -->
<div class="a" style="left:992px;top:1002px;width:285px;height:1px;background:#444"></div>
<svg style="left:1070px;top:1006px" width="185" height="20">
<path d="M5,5 H3.5 A3,3 0 0 0 3.5,11 H5 M11,5 H12.5 A3,3 0 0 1 12.5,11 H11 M5,8 H11" fill="none" stroke="#8a8a8a" stroke-width="1.2"/>
<text x="32" y="13" font-family="Liberation Serif" font-style="italic" font-size="14" fill="#dedede">fx</text>
<path d="M41,17 L44,17 L42.5,19Z M111,17 L114,17 L112.5,19Z" fill="#dedede"/>
<rect x="57" y="3" width="13" height="10" fill="#dedede"/><circle cx="63.5" cy="8" r="3" fill="#535353"/>
<circle cx="91" cy="8.5" r="5.5" fill="#dedede"/><path d="M87,12.5 L95,4.5" stroke="#535353" stroke-width="1.3"/><path d="M95,4.5 A5.5,5.5 0 0 1 87,12.5Z" fill="#535353" opacity=".5"/>
<path d="M112,4 H117 L118,5.5 H124 V13 H112Z" fill="#dedede"/>
<path d="M139.5,3.5 H149.5 V13.5 H143 L139.5,10Z" fill="none" stroke="#dedede" stroke-width="1.3"/><path d="M139.5,10 H143 V13.5" fill="none" stroke="#dedede" stroke-width="1.1"/>
<path d="M166,4 H177 M169,4 V2 H174 V4 M167,5 V15 H176 V5 M169.3,7 V13 M171.5,7 V13 M173.7,7 V13" fill="none" stroke="#dedede" stroke-width="1.2"/>
</svg>
<div class="a" style="left:992px;top:1026px;width:285px;height:1px;background:#3a3a3a"></div>
<!-- watermark -->
<svg style="left:1015px;top:950px" width="65" height="60">
<path d="M30.8,8 L35.8,17 L39.8,12.2 C44,17 49,21 52,25 C55,29 56.5,35 56.4,40 C56.3,44 55,48 51.7,50.6 C49,52.5 46,53 43,53 C39,53 34,53.5 30.8,55.5 C27.5,53.5 23,53 19,52 C15,51.5 11,50 8.5,47 C6,44 5.5,40 5.5,37.5 C5.5,33 7.5,28.5 11,25 C14.5,21.5 18,19 21.5,16 L22,18.5 C25,15 28.5,11.5 30.8,8Z" fill="#e2e2e2"/>
<g fill="none" stroke="#505050" stroke-width="3.4" stroke-linecap="round">
<path d="M5.5,43.5 C11,46.5 18,47.5 22.5,44.2 A5.2,5.2 0 0 0 27.7,39 A5.2,5.2 0 0 0 22.5,33.8 A5.2,5.2 0 0 0 17.3,39 C17.3,40.5 18.5,41.5 20,41.5"/>
<path d="M56.5,43.5 C51,46.5 44,47.5 39.5,44.2 A5.2,5.2 0 0 1 34.3,39 A5.2,5.2 0 0 1 39.5,33.8 A5.2,5.2 0 0 1 44.7,39 C44.7,40.5 43.5,41.5 42,41.5"/>
</g>
</svg>
<div class="t" style="left:1085px;top:964px;font-size:41px;font-weight:400;-webkit-text-stroke:0.9px #e2e2e2;color:#e2e2e2;letter-spacing:2.3px">悟空问答</div>

</body></html>
